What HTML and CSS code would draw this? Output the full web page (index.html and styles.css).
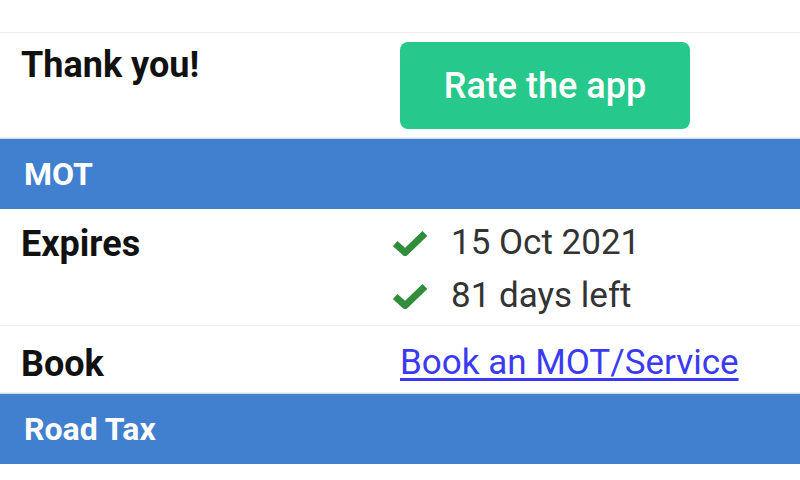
FILE: index.html
```html
<!DOCTYPE html>
<html lang="en">
<head>
    <meta charset="UTF-8">
    <meta name="viewport" content="width=device-width, initial-scale=1.0">
    <title>Vehicle details</title>
    <link rel="stylesheet" href="styles.css">
</head>
<body>
    <div class="details">
        <div class="intro">
            <p>If you enjoy using this app, please help us by giving it a quick rating</p>
        </div>

        <div class="row">
            <div class="label">Thank you!</div>
            <div class="value">
                <button class="rate-button">Rate the app</button>
            </div>
        </div>

        <div class="section">MOT</div>

        <div class="row">
            <div class="label">Expires</div>
            <div class="value">
                <div class="check-line">
                    <svg class="check" viewBox="0 0 32 24"><path d="M2 12.5 L11.5 21 L30 3"/></svg>
                    <span>15 Oct 2021</span>
                </div>
                <div class="check-line">
                    <svg class="check" viewBox="0 0 32 24"><path d="M2 12.5 L11.5 21 L30 3"/></svg>
                    <span>81 days left</span>
                </div>
            </div>
        </div>

        <div class="row row-book">
            <div class="label">Book</div>
            <div class="value">
                <a href="#" class="book-link">Book an MOT/Service</a>
            </div>
        </div>

        <div class="section">Road Tax</div>

        <div class="row row-last">
            <div class="label">Expires</div>
            <div class="value">
                <div class="check-line">
                    <svg class="check" viewBox="0 0 32 24"><path d="M2 12.5 L11.5 21 L30 3"/></svg>
                    <span>01 Jun 2022</span>
                </div>
            </div>
        </div>
    </div>
</body>
</html>
```

FILE: styles.css
```css
body {
    font-family: Roboto, "Liberation Sans", Arial, sans-serif;
    background-color: #fff;
    color: #111;
    margin: 0;
    overflow: hidden;
}
.details {
    width: 800px;
}
.intro {
    height: 32px;
    overflow: hidden;
    display: flex;
    align-items: flex-end;
    border-bottom: 1px solid #eef0ee;
}
.intro p {
    margin: 0 0 33px 22px;
    font-size: 35px;
    line-height: 43px;
    color: #c4c4c4;
    white-space: nowrap;
}
.row {
    display: grid;
    grid-template-columns: 400px 1fr;
    padding: 9px 0 8px;
    border-bottom: 1px solid #eef0ee;
}
.label {
    padding: 2px 0 0 21px;
    font-size: 36px;
    font-weight: bold;
    line-height: 43px;
}
.value {
    font-size: 35px;
    line-height: 43px;
    color: #333;
}
.rate-button {
    width: 290px;
    height: 87px;
    border: none;
    border-radius: 8px;
    background-color: #26c98b;
    color: #fff;
    font-family: inherit;
    font-size: 36px;
    font-weight: 500;
    cursor: pointer;
}
.section {
    height: 70px;
    line-height: 70px;
    padding-left: 24px;
    background-color: #4180cf;
    border-top: 1px solid #9dbfe8;
    color: #fff;
    font-size: 32px;
    font-weight: bold;
}
.row + .section {
    border-top: 1px solid #c8dcf3;
}
.section + .row {
    padding-top: 12px;
}
.check-line {
    display: flex;
    align-items: center;
    gap: 24px;
    margin-left: -7px;
}
.check-line + .check-line {
    margin-top: 10px;
}
.check {
    width: 34px;
    height: 26px;
    fill: none;
    stroke: #2f8d3c;
    stroke-width: 6.5;
    stroke-linejoin: round;
}
.row-book {
    padding: 15px 0 6px;
}
.row-last {
    padding-top: 18px;
}
.book-link {
    color: #3a3af2;
    text-decoration: underline;
    text-underline-offset: 4px;
}
```
